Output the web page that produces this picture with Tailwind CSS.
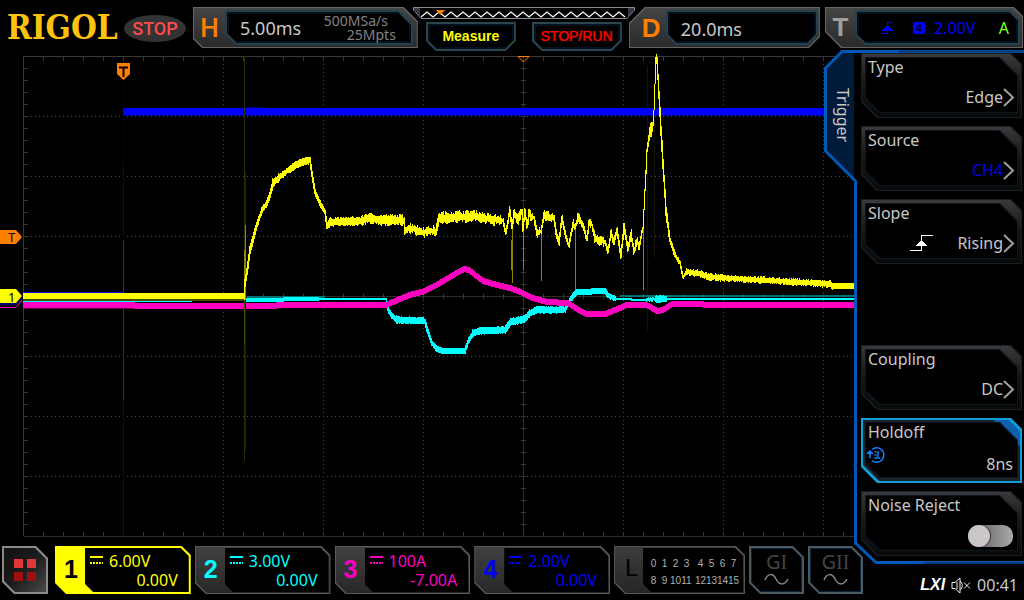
<!DOCTYPE html>
<html lang="en">
<head>
    <meta charset="UTF-8">
    <meta name="viewport" content="width=device-width, initial-scale=1.0">
    <title>RIGOL Oscilloscope</title>
    <script src="https://cdn.jsdelivr.net/npm/@tailwindcss/browser@4"></script>
    <style>
        /* Box with its corners cut off, one size per corner */
        .cut {
            clip-path: polygon(
                var(--tl, 0px) 0, calc(100% - var(--tr, 0px)) 0,
                100% var(--tr, 0px), 100% calc(100% - var(--br, 0px)),
                calc(100% - var(--br, 0px)) 100%, var(--bl, 0px) 100%,
                0 calc(100% - var(--bl, 0px)), 0 var(--tl, 0px));
        }
    </style>
</head>
<body class="h-screen min-h-[600px] flex flex-col overflow-hidden bg-black text-[#c8c8c8] font-['Noto_Sans',sans-serif]">

    <!-- Top bar -->
    <header class="h-[50px] shrink-0 flex pt-[7px] pr-px">
        <div class="w-[193px] shrink-0 flex items-start pl-[7px]">
            <h1 class="w-[117px] text-[33px] leading-[42px] font-bold text-[#ffc20e] font-['DejaVu_Serif_Condensed','DejaVu_Serif',serif]">RIGOL</h1>
            <span class="mt-[8px] w-[62px] h-[27px] rounded-[50%] bg-[#333] flex items-center justify-center text-[18px] font-medium text-[#ff4b4b] font-['Roboto',sans-serif]">STOP</span>
        </div>

        <!-- Horizontal -->
        <button class="cut [--bl:9px] [--tr:14px] flex-[225] h-[41px] bg-[#636363] p-px text-left">
            <span class="cut [--bl:9px] [--tr:14px] h-full flex bg-linear-to-b from-[#454545] to-[#2a2a2a] pt-[2px] pb-[2px] pr-[4px]">
                <span class="w-[31px] shrink-0 text-center text-[26px] leading-[36px] font-medium text-[#ff8000] font-['Roboto',sans-serif]">H</span>
                <span class="cut [--bl:11px] [--tr:14px] flex-1 bg-[#23424e] p-[2px]">
                    <span class="cut [--bl:10px] [--tr:13px] h-full flex justify-between bg-black border-2 border-[#04101e] pl-[11px]">
                        <span class="text-[18px] leading-[28px]">5.00ms</span>
                        <span class="w-[96px] text-[14px] leading-[14px] text-[#828282]">
                            <span class="block pl-[11px]">500MSa/s</span>
                            <span class="block pl-[34px]">25Mpts</span>
                        </span>
                    </span>
                </span>
            </span>
        </button>

        <!-- Memory strip and quick keys -->
        <div class="w-[222px] shrink-0 -ml-[5px] -mr-[6px] relative z-10">
            <svg class="block w-full h-[12px]" viewBox="0 0 222 12" fill="none">
                <path d="M.5 .5H221.5V3L214 11.5H8L.5 3Z" fill="#000" stroke="#8a8a94"/>
                <path d="M1 1H7V10L1 3ZM221 1H215V10L221 3Z" fill="#3a3a44"/>
                <path id="memoryWave" stroke="#fff" stroke-width="1.3"/>
                <path d="M23 3H32L27.5 8Z" fill="#ff8000"/>
            </svg>
            <div class="flex justify-between mt-[3px] px-[13px]">
                <button class="cut [--bl:10px] [--br:10px] w-[90px] h-[29px] bg-[#2c4650] p-[2px]">
                    <span class="cut [--bl:9px] [--br:9px] h-full block bg-black border-2 border-[#04101e] text-[14px] leading-[21px] font-bold text-[#ffff00] font-['Liberation_Sans',sans-serif]">Measure</span>
                </button>
                <button class="cut [--bl:10px] [--br:10px] w-[90px] h-[29px] bg-[#2c4650] p-[2px]">
                    <span class="cut [--bl:9px] [--br:9px] h-full block bg-black border-2 border-[#04101e] text-[14px] leading-[20px] text-[#ff0000] [text-shadow:0_0_1px_#ff0000] font-['Liberation_Sans',sans-serif]">STOP/RUN</span>
                </button>
            </div>
        </div>

        <!-- Delay -->
        <button class="cut [--tl:16px] [--br:11px] flex-[191] h-[41px] bg-[#636363] p-px text-left">
            <span class="cut [--tl:16px] [--br:11px] h-full flex bg-linear-to-b from-[#454545] to-[#2a2a2a] pt-[2px] pb-[2px] pr-px">
                <span class="w-[36px] shrink-0 pl-[12px] text-[26px] leading-[36px] font-bold text-[#ff8000] font-['Liberation_Sans',sans-serif]">D</span>
                <span class="cut [--tl:0px] [--bl:10px] [--br:10px] flex-1 bg-[#23424e] p-[2px]">
                    <span class="cut [--bl:9px] [--br:9px] h-full block bg-black border-2 border-[#04101e] pl-[11px] text-[18px] leading-[30px]">20.0ms</span>
                </span>
            </span>
        </button>

        <!-- Trigger state -->
        <button class="cut [--bl:16px] [--tr:9px] flex-[198] h-[41px] ml-[5px] bg-[#636363] p-px text-left">
            <span class="cut [--bl:16px] [--tr:9px] h-full flex bg-linear-to-b from-[#454545] to-[#2a2a2a] pt-[2px] pb-[2px] pr-[2px]">
                <span class="w-[29px] shrink-0 text-center text-[26px] leading-[34px] font-bold text-[#a0a0a0] font-['Liberation_Sans',sans-serif]">T</span>
                <span class="cut [--bl:10px] [--tr:10px] flex-1 bg-[#23424e] p-[2px]">
                    <span class="cut [--bl:9px] [--tr:9px] h-full flex items-center bg-black border-2 border-[#04101e] pl-[22px] pr-[7px] text-[16px] text-[#0000ff]">
                        <svg class="w-[12px] h-[14px]" viewBox="0 0 12 14" fill="none" stroke="#0000ff" shape-rendering="crispEdges">
                            <path d="M0 12.5H6.500V1.5H11"/><path d="M6 4L12 10H0Z" fill="#0000ff" stroke="none"/>
                        </svg>
                        <span class="ml-[20px] w-[12px] h-[12px] rounded-[2px] bg-[#0000ff] text-black text-[11px] leading-[12px] text-center font-bold">4</span>
                        <span class="ml-[9px]">2.00V</span>
                        <span class="ml-auto text-[#80ff20]">A</span>
                    </span>
                </span>
            </span>
        </button>
    </header>

    <div class="flex-1 min-h-0 flex">
        <div class="flex-1 min-w-0 flex flex-col">

            <!-- Waveform area -->
            <main class="flex-1 min-h-0">
                <svg class="block w-full h-full" viewBox="0 50 856 490" preserveAspectRatio="none" fill="none">
                    <g stroke="#383838" shape-rendering="crispEdges">
                        <path d="M23.500 536V56.500H855"/>
                        <path d="M23.500 536.500H855M523.500 56V536M23.500 296.500H855" stroke="#2c2c2c"/>
                        <path id="dots" stroke-dasharray="1 3" stroke="#4a4a4a"/>
                        <path id="ticks"/>
                    </g>
                    <g shape-rendering="crispEdges">
                        <path d="M123.500 80V165M123.500 235V292" stroke="#00003c"/>
                        <path d="M123.500 165V235" stroke="#141400"/>
                        <path d="M123.500 240V400" stroke="#3c3c00"/>
                        <path d="M123.500 400V536" stroke="#141400"/>
                        <path d="M24 292.500H123" stroke="#0000ff"/>
                        <path d="M123 108H832V115H123Z" fill="#0000ff"/>
                        <path d="M123 115.500H832M245 107.500H262" stroke="#000090"/>
                        <path d="M647.500 66V330M654.500 120V258" stroke="#161608"/>
                        <path d="M655.500 292V320M647.500 292V320" stroke="#280018"/>
                        <path d="M247 296.500H325M576 289.500H606M620 296H855" stroke="#007070" stroke-width="2"/>
                        <path id="cyan" stroke="#00ffff"/>
                        <path d="M24 308.500H250" stroke="#600045"/>
                        <path id="magenta" stroke="#ff00c0"/>
                        <path d="M244.500 56V461" stroke="#2c2c00"/>
                        <path d="M245.500 172V450" stroke="#1e1e00"/>
                        <path d="M244.500 300V345" stroke="#4c4c00"/>
                        <path d="M244.500 250V300M245.500 225V300M512.500 225V283M511.500 240V270M523.500 228V270M541.500 230V281M575.500 225V290M643.500 225V290" stroke="#8a8a00"/>
                        <path d="M24 300H244" stroke="#4a4a00" stroke-width="2"/>
                        <path id="yellow" stroke="#ffff00"/>
                    </g>
                    <!-- Markers -->
                    <path d="M117 63H130V74L123.500 80L117 74Z" fill="#ff8000"/>
                    <path d="M119 67.500H128M123.500 68V77" stroke="#000" stroke-width="2"/>
                    <path d="M518 56.500H529L523.500 62Z" stroke="#ff8000"/>
                    <path d="M0 230H16L22 237L16 244H0Z" fill="#ff8000"/>
                    <text x="8" y="242" font-size="12" fill="#000" font-family="Liberation Sans, sans-serif">T</text>
                    <path d="M0 307.500H16L22 300" stroke="#ff00c0"/>
                    <path d="M0 304H16L22 298" stroke="#0000ff"/>
                    <path d="M0 289H16L22 296L16 303H0Z" fill="#ffff00"/>
                    <text x="8" y="302" font-size="13" fill="#000" font-family="Noto Sans, sans-serif">1</text>
                </svg>
            </main>

            <!-- Channel bar -->
            <footer class="h-[60px] shrink-0 relative z-10 flex gap-[4px] pt-[6px] pl-[2px] -mr-[7px]">
                <button aria-label="Menu" class="cut [--tr:12px] [--bl:12px] w-[46px] h-[48px] mr-[3px] bg-[#8a8a8a] p-[2px]">
                    <span class="cut [--tr:11px] [--bl:11px] h-full grid grid-cols-[9px_9px] gap-[4px] place-content-center bg-linear-to-br from-[#111] via-[#1c1c1c] to-[#4a4a4a]">
                        <i class="w-[9px] h-[9px] bg-[#e03838]"></i><i class="w-[9px] h-[9px] bg-[#e03838]"></i>
                        <i class="w-[9px] h-[9px] bg-[#a01010]"></i><i class="w-[9px] h-[9px] bg-[#a01010]"></i>
                    </span>
                </button>

                <div id="channels" class="flex-1 min-w-0 flex gap-[4px]"></div>

                <button class="cut [--bl:11px] [--tr:9px] w-[131px] h-[48px] bg-[#555] p-px text-left">
                    <span class="cut [--bl:11px] [--tr:9px] h-full flex bg-linear-to-b from-[#3c3c3c] to-[#262626] p-px">
                        <span class="w-[27px] shrink-0 pl-[9px] text-[24px] leading-[40px] text-black font-['Roboto',sans-serif]">L</span>
                        <span class="cut [--bl:8px] [--tr:8px] flex-1 bg-black pt-[7px] pl-[5px] text-[10px] leading-[17px] text-[#b0b0b0] text-center font-['Liberation_Sans',sans-serif]">
                            <span class="grid grid-cols-[repeat(4,11px)_3px_repeat(4,11px)]"><i class="not-italic">0</i><i class="not-italic">1</i><i class="not-italic">2</i><i class="not-italic">3</i><i class="not-italic col-start-6">4</i><i class="not-italic">5</i><i class="not-italic">6</i><i class="not-italic">7</i></span>
                            <span class="grid grid-cols-[repeat(4,11px)_3px_repeat(4,11px)]"><i class="not-italic">8</i><i class="not-italic">9</i><i class="not-italic">10</i><i class="not-italic">11</i><i class="not-italic col-start-6">12</i><i class="not-italic">13</i><i class="not-italic">14</i><i class="not-italic">15</i></span>
                        </span>
                    </span>
                </button>
                <button class="cut [--bl:11px] [--tr:11px] w-[55px] h-[48px] bg-[#4c5a60] p-[2px]">
                    <span class="cut [--bl:10px] [--tr:10px] h-full block bg-black border border-[#06243c] pt-[2px] text-[20px] leading-[22px] text-[#444]">
                        G<span class="font-['Liberation_Serif',serif]">I</span>
                        <svg class="block mx-auto w-[25px] h-[13px]" viewBox="0 0 25 13" fill="none" stroke="#8a8a8a" stroke-width="1.500"><path d="M1 7C4 0 9 0 12 6S20 13 24 6"/></svg>
                    </span>
                </button>
                <button class="cut [--bl:11px] [--tr:11px] w-[55px] h-[48px] bg-[#4c5a60] p-[2px]">
                    <span class="cut [--bl:10px] [--tr:10px] h-full block bg-black border border-[#06243c] pt-[2px] text-[20px] leading-[22px] text-[#444]">
                        G<span class="font-['Liberation_Serif',serif]">II</span>
                        <svg class="block mx-auto w-[25px] h-[13px]" viewBox="0 0 25 13" fill="none" stroke="#8a8a8a" stroke-width="1.500"><path d="M1 7C4 0 9 0 12 6S20 13 24 6"/></svg>
                    </span>
                </button>
            </footer>
        </div>

        <!-- Trigger menu -->
        <aside class="w-[168px] shrink-0 relative flex flex-col">
            <svg class="absolute top-0 -left-[32px] w-[200px] h-[516px]" viewBox="0 0 200 516" fill="none">
                <path d="M31 131L1 102V18L18 1H200V512H53L31 492V131Z" fill="#000"/>
                <path d="M30 130L2 101V19L18 2H30Z" fill="#001b3a"/>
                <path d="M200 512.500H52L31.500 493V131L1.500 101V18L18 1.500H200" stroke="#0058b8" stroke-width="3"/>
                <path d="M75 1.500H200M100 513H200" stroke="#003a78" stroke-width="2"/>
            </svg>
            <h2 class="absolute top-[20px] -left-[25px] h-[90px] [writing-mode:vertical-rl] flex items-center justify-center text-[16px] leading-[24px]">Trigger</h2>

            <nav class="relative grid grid-rows-[repeat(7,65px)] gap-[8px] pt-[3px] pl-[5px] pr-[2px] text-[16px] leading-[22px]">
                <button class="cut [--tr:11px] [--bl:16px] bg-[#161f27] p-px text-left">
                    <span class="cut [--tr:11px] [--bl:16px] h-full block bg-linear-to-b from-[#3a3a3a] via-[#161616] to-[#080a08] pt-[3px] pb-[4px] px-[3px]">
                        <span class="cut [--tr:18px] [--bl:14px] h-full block bg-[#0a1622] p-px">
                            <span class="cut [--tr:18px] [--bl:14px] h-full flex flex-col justify-between bg-black pb-[4px] pl-[2px] pr-[2px]">
                                <span class="-mt-[2px]">Type</span>
                                <span class="flex items-center justify-end">Edge
                                    <svg class="w-[12px] h-[20px]" viewBox="0 0 12 20" fill="none" stroke="#a0a0a0" stroke-width="2"><path d="M1 2L10 10.500L1 19"/></svg>
                                </span>
                            </span>
                        </span>
                    </span>
                </button>
                <button class="cut [--tr:11px] [--bl:16px] bg-[#161f27] p-px text-left">
                    <span class="cut [--tr:11px] [--bl:16px] h-full block bg-linear-to-b from-[#3a3a3a] via-[#161616] to-[#080a08] pt-[3px] pb-[4px] px-[3px]">
                        <span class="cut [--tr:18px] [--bl:14px] h-full block bg-[#0a1622] p-px">
                            <span class="cut [--tr:18px] [--bl:14px] h-full flex flex-col justify-between bg-black pb-[4px] pl-[2px] pr-[2px]">
                                <span class="-mt-[2px]">Source</span>
                                <span class="flex items-center justify-end text-[#0000e8]">CH4
                                    <svg class="w-[12px] h-[20px]" viewBox="0 0 12 20" fill="none" stroke="#a0a0a0" stroke-width="2"><path d="M1 2L10 10.500L1 19"/></svg>
                                </span>
                            </span>
                        </span>
                    </span>
                </button>
                <button class="cut [--tr:11px] [--bl:16px] bg-[#161f27] p-px text-left">
                    <span class="cut [--tr:11px] [--bl:16px] h-full block bg-linear-to-b from-[#3a3a3a] via-[#161616] to-[#080a08] pt-[3px] pb-[4px] px-[3px]">
                        <span class="cut [--tr:18px] [--bl:14px] h-full block bg-[#0a1622] p-px">
                            <span class="cut [--tr:18px] [--bl:14px] h-full flex flex-col justify-between bg-black pb-[4px] pl-[2px] pr-[2px]">
                                <span class="-mt-[2px]">Slope</span>
                                <span class="flex items-center justify-end">
                                    <svg class="w-[23px] h-[17px] mr-[24px]" viewBox="0 0 23 17" fill="none" stroke="#fff" shape-rendering="crispEdges"><path d="M0 15.500H11.500V.5H23"/><path d="M11 5L17 11H5Z" fill="#fff" stroke="none"/></svg>
                                    Rising
                                    <svg class="w-[12px] h-[20px]" viewBox="0 0 12 20" fill="none" stroke="#a0a0a0" stroke-width="2"><path d="M1 2L10 10.500L1 19"/></svg>
                                </span>
                            </span>
                        </span>
                    </span>
                </button>
                <button class="row-start-5 cut [--tr:11px] [--bl:16px] bg-[#161f27] p-px text-left">
                    <span class="cut [--tr:11px] [--bl:16px] h-full block bg-linear-to-b from-[#3a3a3a] via-[#161616] to-[#080a08] pt-[3px] pb-[4px] px-[3px]">
                        <span class="cut [--tr:18px] [--bl:14px] h-full block bg-[#0a1622] p-px">
                            <span class="cut [--tr:18px] [--bl:14px] h-full flex flex-col justify-between bg-black pb-[4px] pl-[2px] pr-[2px]">
                                <span class="-mt-[2px]">Coupling</span>
                                <span class="flex items-center justify-end">DC
                                    <svg class="w-[12px] h-[20px]" viewBox="0 0 12 20" fill="none" stroke="#a0a0a0" stroke-width="2"><path d="M1 2L10 10.500L1 19"/></svg>
                                </span>
                            </span>
                        </span>
                    </span>
                </button>
                <button class="row-start-6 cut [--tr:11px] [--bl:16px] bg-[#0fa0dc] p-[2px] text-left">
                    <span class="cut [--tr:11px] [--bl:16px] h-full block bg-[linear-gradient(225deg,#1060b0_18px,#1c2226_19px)] pt-[2px] pb-[3px] px-[2px]">
                        <span class="cut [--tr:18px] [--bl:14px] h-full block bg-[#0a1622] p-px">
                            <span class="cut [--tr:18px] [--bl:14px] h-full flex flex-col bg-black pl-[2px] pr-[4px]">
                                <span class="-mt-[2px]">Holdoff</span>
                                <span class="flex items-start justify-between -ml-[2px] pt-[3px]">
                                    <svg class="w-[20px] h-[18px]" viewBox="0 0 20 18" fill="none" stroke="#1080ff" stroke-width="1.600">
                                        <path d="M6 3.500A7.200 7.200 0 1 1 6 14.500M4 12V7"/>
                                        <path d="M0 8L4 4L8 8Z" fill="#1080ff" stroke="none"/>
                                        <path d="M8.500 6H10.500M8.500 9H10.500M12 5V11M8.500 12H14" stroke-width="1.500"/>
                                    </svg>
                                    <span class="pt-[8px] leading-[20px]">8ns</span>
                                </span>
                            </span>
                        </span>
                    </span>
                </button>
                <label for="noiseReject" class="row-start-7 cut [--tr:11px] [--bl:16px] bg-[#161f27] p-px">
                    <span class="cut [--tr:11px] [--bl:16px] h-full block bg-linear-to-b from-[#3a3a3a] via-[#161616] to-[#080a08] pt-[3px] pb-[4px] px-[3px]">
                        <span class="cut [--tr:18px] [--bl:14px] h-full block bg-[#0a1622] p-px">
                            <span class="cut [--tr:18px] [--bl:14px] h-full flex flex-col justify-between bg-black pb-[3px] pl-[2px] pr-[4px]">
                                <span class="-mt-[2px]">Noise Reject</span>
                                <input id="noiseReject" type="checkbox" class="appearance-none self-end w-[45px] h-[22px] rounded-[10px] bg-linear-to-r from-[#555] to-[#aaa] before:block before:w-[22px] before:h-[22px] before:rounded-full before:bg-[#cac6ca] before:shadow-[1px_0_1px_#333] checked:before:ml-auto">
                            </span>
                        </span>
                    </span>
                </label>
            </nav>

            <!-- Status -->
            <div class="relative mt-auto mb-[4px] flex items-center justify-end gap-[6px] pr-[6px]">
                <span class="text-[16px] leading-[22px] font-bold italic text-white font-['Liberation_Sans',sans-serif]">LXI</span>
                <svg class="w-[20px] h-[17px]" viewBox="0 0 20 17" fill="none" stroke="#f0f0f0">
                    <path d="M1 5.500H4L9 1V16L4 11.500H1Z"/><path d="M6 5V12" /><path d="M9 4C12 6 12 11 9 13"/><path d="M13 5.500L19 11.500M19 5.500L13 11.500"/>
                </svg>
                <time class="text-[16px] leading-[22px]">00:41</time>
            </div>
        </aside>
    </div>

    <script>
        // Channels
        const channels = [
            { n: 1, scale: '6.00V', offset: '0.00V', color: 'text-[#ffff00]', edge: 'bg-[#ffff00]', frame: 'bg-[#ffff00]', label: 'text-black' },
            { n: 2, scale: '3.00V', offset: '0.00V', color: 'text-[#00ffff]', edge: 'bg-[#585858]', frame: 'bg-linear-to-b from-[#404040] to-[#282828]', label: 'text-[#00ffff]' },
            { n: 3, scale: '100A', offset: '-7.00A', color: 'text-[#ff00c0]', edge: 'bg-[#585858]', frame: 'bg-linear-to-b from-[#404040] to-[#282828]', label: 'text-[#ff00c0]' },
            { n: 4, scale: '2.00V', offset: '0.00V', color: 'text-[#0000ff]', edge: 'bg-[#585858]', frame: 'bg-linear-to-b from-[#404040] to-[#282828]', label: 'text-[#0000ff]' }
        ];
        document.getElementById('channels').innerHTML = channels.map(ch => `
            <button class="cut [--bl:11px] [--tr:9px] flex-1 h-[48px] ${ch.edge} p-px text-left">
                <span class="cut [--bl:11px] [--tr:9px] h-full flex ${ch.frame} p-px">
                    <span class="w-[28px] shrink-0 text-center text-[25px] leading-[42px] font-bold ${ch.label} font-['Liberation_Sans',sans-serif]">${ch.n}</span>
                    <span class="cut [--bl:8px] [--tr:8px] flex-1 bg-black pt-[4px] pl-[5px] pr-[11px] text-[16px] leading-[19px] ${ch.color}">
                        <span class="flex items-center gap-[6px]">
                            <svg class="w-[13px] h-[8px] mb-[3px]" viewBox="0 0 13 8" stroke="currentColor" fill="none" shape-rendering="crispEdges"><path d="M0 1H13" stroke-width="2"/><path d="M0 7H13" stroke-width="2" stroke-dasharray="2 1"/></svg>
                            ${ch.scale}
                        </span>
                        <span class="block text-right">${ch.offset}</span>
                    </span>
                </span>
            </button>`).join('');

        // Zigzag in the memory strip
        let zig = 'M8 10';
        for (let x = 14, i = 0; x <= 214; x += 6, i++) zig += `L${x} ${i % 2 ? 10 : 5}`;
        document.getElementById('memoryWave').setAttribute('d', zig);

        // Graticule
        let dots = '', ticks = '';
        for (let x = 223; x < 855; x += 100) if (x !== 523) dots += `M${x}.5 56V536`;
        for (let y = 116; y < 536; y += 60) if (y !== 296) dots += `M23 ${y}.5H855`;
        for (let x = 43; x < 855; x += 20) ticks += `M${x}.5 56V61M${x}.5 294V299M${x}.5 532V536`;
        for (let y = 68; y < 536; y += 12) ticks += `M23 ${y}.5H28M521 ${y}.5H526`;
        document.getElementById('dots').setAttribute('d', dots);
        document.getElementById('ticks').setAttribute('d', ticks);

        // Small repeatable noise source
        let seed = 7;
        function rand() {
            seed = (seed * 16807) % 2147483647;
            return seed / 2147483647;
        }

        // Draws one vertical sliver per column. Points are [x, y, half thickness, noise]
        function drawTrace(id, points) {
            let d = '', k = 0;
            for (let x = points[0][0]; x < points[points.length - 1][0]; x++) {
                let lo = Infinity, hi = -Infinity, th = 1, noise = 0;
                for (const t of [0, 0.25, 0.5, 0.75, 1]) {
                    while (k < points.length - 2 && points[k + 1][0] <= x + t) k++;
                    const a = points[k], b = points[k + 1];
                    const y = a[1] + (b[1] - a[1]) * (x + t - a[0]) / (b[0] - a[0]);
                    lo = Math.min(lo, y);
                    hi = Math.max(hi, y);
                    th = a[2];
                    noise = a[3];
                }
                lo = Math.round(lo - th - rand() * noise);
                hi = Math.round(hi + th + rand() * noise);
                d += `M${x}.5 ${lo}V${hi}`;
            }
            document.getElementById(id).setAttribute('d', d);
        }

        drawTrace('yellow', [
            [23, 296, 3, 0], [244, 296, 3, 0], [245, 283, 3, 1], [247, 272, 3, 1], [250, 250, 3, 1], [257, 225, 2, 1], [262, 210, 2, 1],
            [267, 203, 2, 2], [270, 195, 2, 2], [273, 183, 2, 3], [280, 177, 2, 2], [287, 171, 2, 2], [293, 167, 3, 1],
            [300, 163, 3, 1], [310, 160, 3, 0], [312, 174, 3, 0], [315, 192, 2, 1], [320, 203, 2, 1], [325, 212, 2, 1],
            [327, 226, 2, 1], [330, 222, 3, 2], [363, 221, 3, 3], [367, 218, 3, 3], [380, 220, 3, 3], [404, 220, 2, 3],
            [405, 230, 2, 4], [412, 228, 2, 4], [420, 232, 2, 4], [436, 231, 2, 3], [439, 218, 3, 4], [475, 216, 3, 3], [487, 219, 2, 4], [503, 221, 1, 2],
            [506, 233, 1, 2], [510, 210, 1, 3], [512, 227, 1, 1], [514, 213, 2, 3], [518, 220, 2, 3], [522, 211, 1, 2],
            [523, 230, 1, 1], [525, 210, 1, 1], [527, 227, 1, 1], [529, 214, 2, 4], [534, 218, 1, 2], [537, 232, 2, 4],
            [541, 232, 1, 1], [544, 215, 2, 4], [554, 218, 1, 2], [556, 232, 1, 3], [559, 243, 1, 2], [562, 217, 1, 2],
            [566, 238, 1, 3], [569, 246, 1, 2], [573, 223, 1, 3], [575, 228, 1, 1], [578, 218, 2, 3], [583, 225, 1, 2],
            [587, 240, 1, 1], [589, 222, 2, 3], [592, 225, 1, 2], [595, 238, 2, 4], [605, 242, 1, 2], [608, 252, 1, 2],
            [611, 233, 1, 3], [614, 242, 1, 2], [617, 230, 1, 3], [621, 256, 1, 2], [624, 226, 1, 3], [628, 250, 1, 2],
            [631, 233, 1, 3], [634, 252, 1, 3], [637, 240, 1, 3], [639, 248, 1, 2], [643, 228, 0, 1], [645, 190, 0, 1],
            [647, 150, 1, 4], [650, 133, 2, 6], [653, 126, 1, 4], [654, 110, 0, 0], [656, 57, 0, 0], [657, 60, 2, 2],
            [660, 113, 3, 3], [663, 163, 3, 3], [666, 210, 3, 3], [670, 240, 2, 1], [675, 255, 1, 2], [680, 263, 1, 1],
            [683, 277, 1, 1], [687, 272, 2, 2], [697, 273, 2, 2], [710, 277, 2, 2], [830, 284, 2, 3], [834, 286, 3, 0], [855, 286, 3, 0]
        ]);
        drawTrace('cyan', [
            [23, 302, 1, 0], [247, 300, 2, 0], [320, 299, 1, 0], [386, 299, 1, 0], [388, 309, 2, 1], [392, 316, 2, 1],
            [397, 320, 3, 1], [425, 321, 2, 1], [427, 329, 2, 1], [432, 343, 2, 1], [437, 349, 3, 0], [443, 351, 3, 0],
            [465, 351, 2, 1], [468, 342, 2, 1], [473, 333, 3, 1], [480, 331, 3, 1], [505, 330, 3, 1], [511, 322, 3, 1],
            [525, 319, 3, 1], [530, 313, 3, 1], [537, 310, 3, 1], [565, 310, 2, 1], [567, 305, 2, 1], [573, 296, 3, 0],
            [577, 292, 3, 0], [605, 291, 3, 0], [609, 296, 2, 1], [617, 299, 1, 0], [647, 300, 1, 2], [656, 299, 3, 1],
            [668, 299, 1, 0], [855, 299, 1, 0]
        ]);
        drawTrace('magenta', [
            [23, 305, 3, 0], [247, 306, 3, 0], [305, 305, 3, 0], [386, 305, 3, 0], [400, 299, 3, 0], [410, 295, 3, 0],
            [425, 291, 3, 0], [440, 283, 3, 0], [460, 271, 3, 0], [465, 269, 3, 0], [469, 270, 3, 0], [483, 281, 3, 0],
            [497, 285, 3, 0], [510, 288, 3, 0], [523, 293, 3, 0], [533, 298, 3, 0], [547, 302, 3, 0], [568, 303, 3, 0],
            [577, 309, 3, 0], [587, 314, 3, 0], [605, 314, 3, 0], [620, 308, 3, 0], [627, 305, 3, 0], [647, 305, 3, 0],
            [657, 311, 3, 0], [663, 310, 3, 0], [672, 304, 3, 0], [697, 304, 3, 0], [710, 305, 3, 0], [855, 305, 3, 0]
        ]);
    </script>
</body>
</html>
